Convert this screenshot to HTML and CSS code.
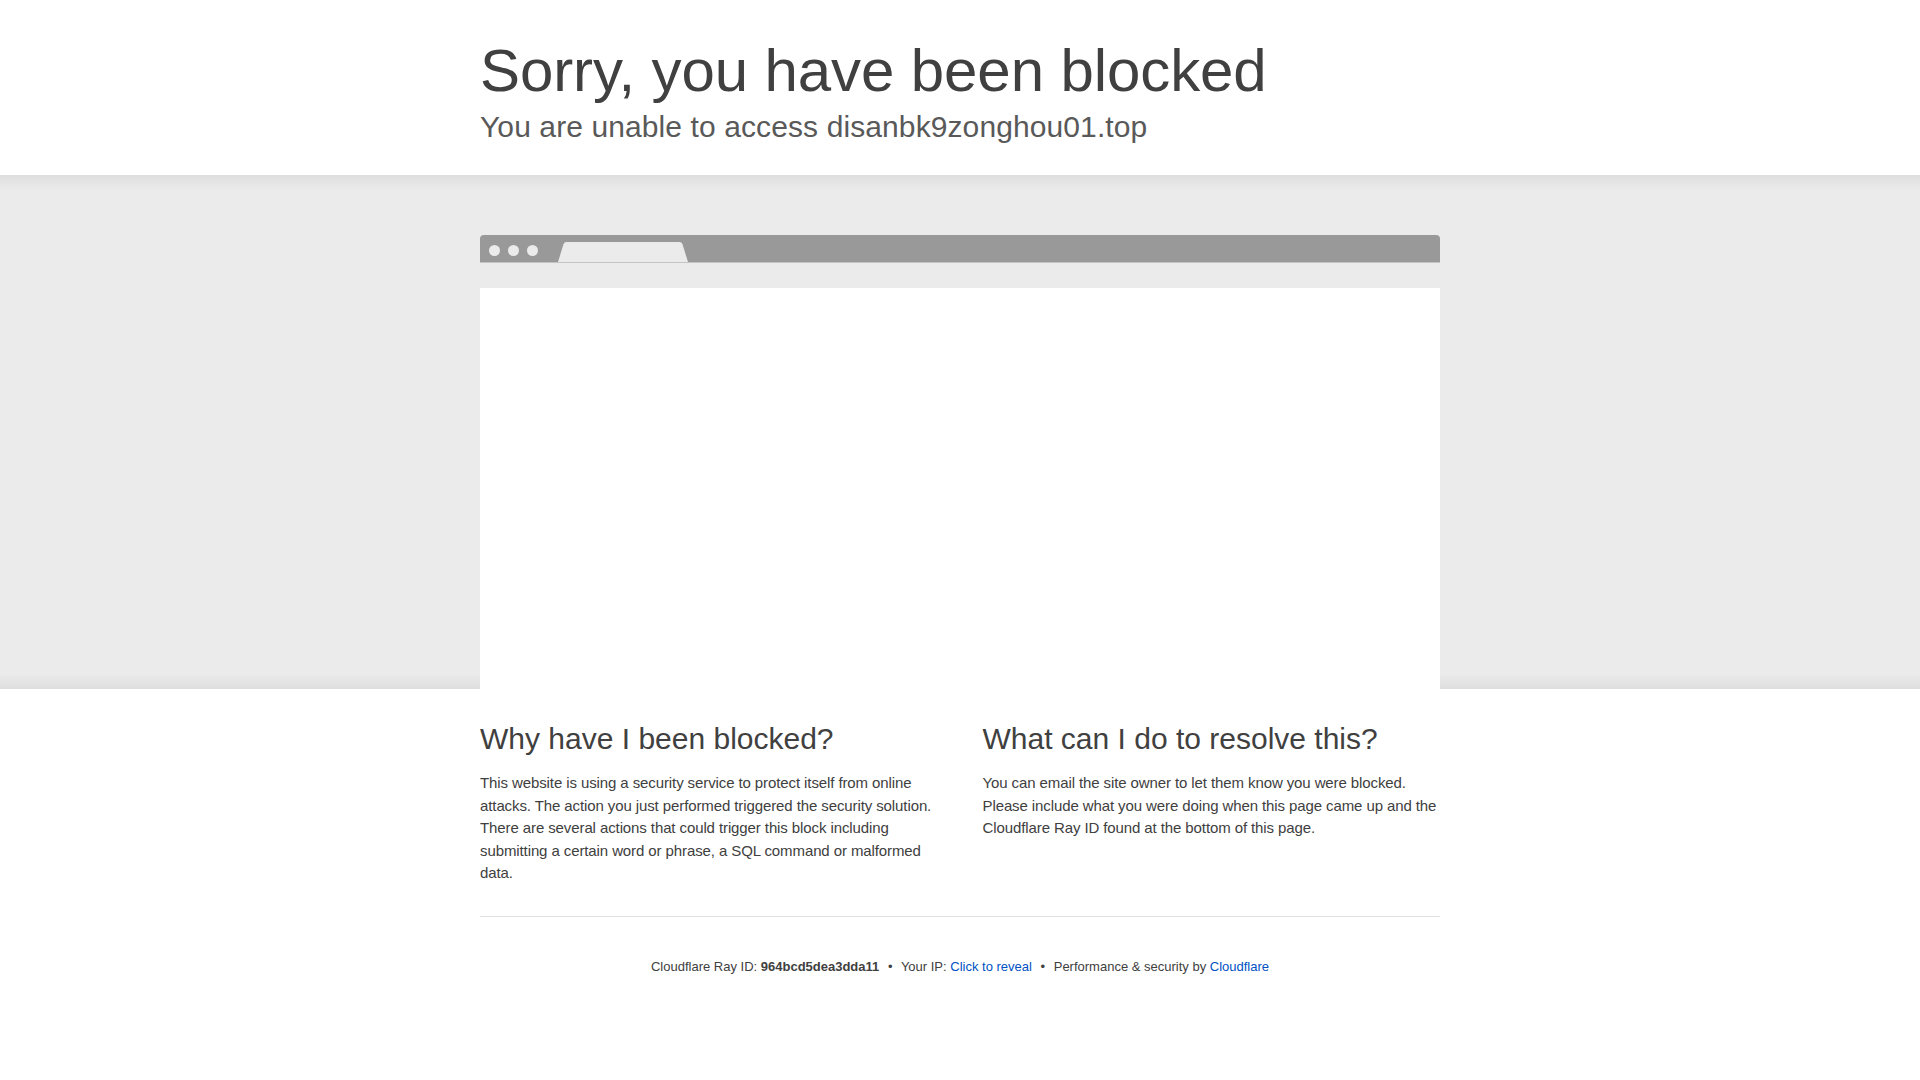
FILE: index.html
```
<!DOCTYPE html>
<html lang="en">
<head>
    <meta charset="UTF-8">
    <title>Attention Required! | Cloudflare</title>
    <link rel="stylesheet" href="styles.css">
</head>
<body>
    <div class="header">
        <div class="wrapper">
            <h1 class="title">Sorry, you have been blocked</h1>
            <h2 class="subheadline">You are unable to access disanbk9zonghou01.top</h2>
        </div>
    </div>

    <div class="highlight">
        <div class="wrapper">
            <div class="browser-bar">
                <span class="dot"></span>
                <span class="dot"></span>
                <span class="dot"></span>
                <svg class="tab" width="130" height="20" viewBox="0 0 130 20">
                    <path d="M0 20 L5.5 2.2 Q6.2 0 8.5 0 H121.5 Q123.8 0 124.5 2.2 L130 20 Z" fill="#ebebeb"/>
                </svg>
            </div>
            <div class="screenshot"></div>
        </div>
    </div>

    <div class="section wrapper">
        <div class="columns">
            <div class="column">
                <h2>Why have I been blocked?</h2>
                <p>This website is using a security service to protect itself from online attacks. The action you just performed triggered the security solution. There are several actions that could trigger this block including submitting a certain word or phrase, a SQL command or malformed data.</p>
            </div>
            <div class="column">
                <h2>What can I do to resolve this?</h2>
                <p>You can email the site owner to let them know you were blocked. Please include what you were doing when this page came up and the Cloudflare Ray ID found at the bottom of this page.</p>
            </div>
        </div>
    </div>

    <div class="footer wrapper">
        <span>Cloudflare Ray ID: <strong>964bcd5dea3dda11</strong></span>
        <span class="sep">&bull;</span>
        <span>Your IP: <a href="#">Click to reveal</a></span>
        <span class="sep">&bull;</span>
        <span>Performance &amp; security by <a href="#">Cloudflare</a></span>
    </div>
</body>
</html>
```

FILE: styles.css
```
body {
    margin: 0;
    font-family: "Liberation Sans", Arial, Helvetica, sans-serif;
    color: #404040;
    background: #fff;
}
.wrapper {
    width: 960px;
    margin: 0 auto;
}
.header {
    padding: 35px 0 30px;
}
.title {
    margin: 0;
    font-size: 60px;
    font-weight: 300;
    line-height: 1.2;
    color: #404040;
    letter-spacing: -0.1px;
}
.subheadline {
    margin: 2px 0 0;
    font-size: 30px;
    font-weight: 300;
    line-height: 1.2;
    color: #595959;
    letter-spacing: 0.1px;
}
.highlight {
    background-color: #ebebeb;
    background-image: linear-gradient(to top, #dedede, #ebebeb 3%, #ebebeb 97%, #dedede);
    padding-top: 60px;
}
.browser-bar {
    display: flex;
    align-items: flex-end;
    height: 27px;
    background: #999;
    border-radius: 4px 4px 0 0;
    box-shadow: 0 1px 0 #c4c4c4;
    padding-left: 9px;
}
.dot {
    width: 11px;
    height: 11px;
    border-radius: 50%;
    background: #ebebeb;
    margin-right: 8px;
    align-self: center;
    margin-top: 3px;
}
.tab {
    display: block;
    margin-left: 12px;
}
.screenshot {
    margin-top: 26px;
    height: 401px;
    background: #fff;
}
.section {
    padding: 32px 0 31px;
}
.columns {
    display: grid;
    grid-template-columns: 1fr 1fr;
    column-gap: 45px;
}
.column h2 {
    margin: 0 0 15px;
    font-size: 30px;
    font-weight: 300;
    line-height: 1.2;
    color: #404040;
}
.column p {
    margin: 0;
    font-size: 15px;
    line-height: 22.6px;
    letter-spacing: -0.1px;
    color: #404040;
}
.footer {
    border-top: 1px solid #e0e0e0;
    padding: 40px 0;
    text-align: center;
    font-size: 13px;
    line-height: 20px;
    color: #404040;
}
.footer strong {
    font-weight: 700;
}
.footer a {
    color: #0051c3;
    text-decoration: none;
}
.sep {
    margin: 0 5px;
}
```
